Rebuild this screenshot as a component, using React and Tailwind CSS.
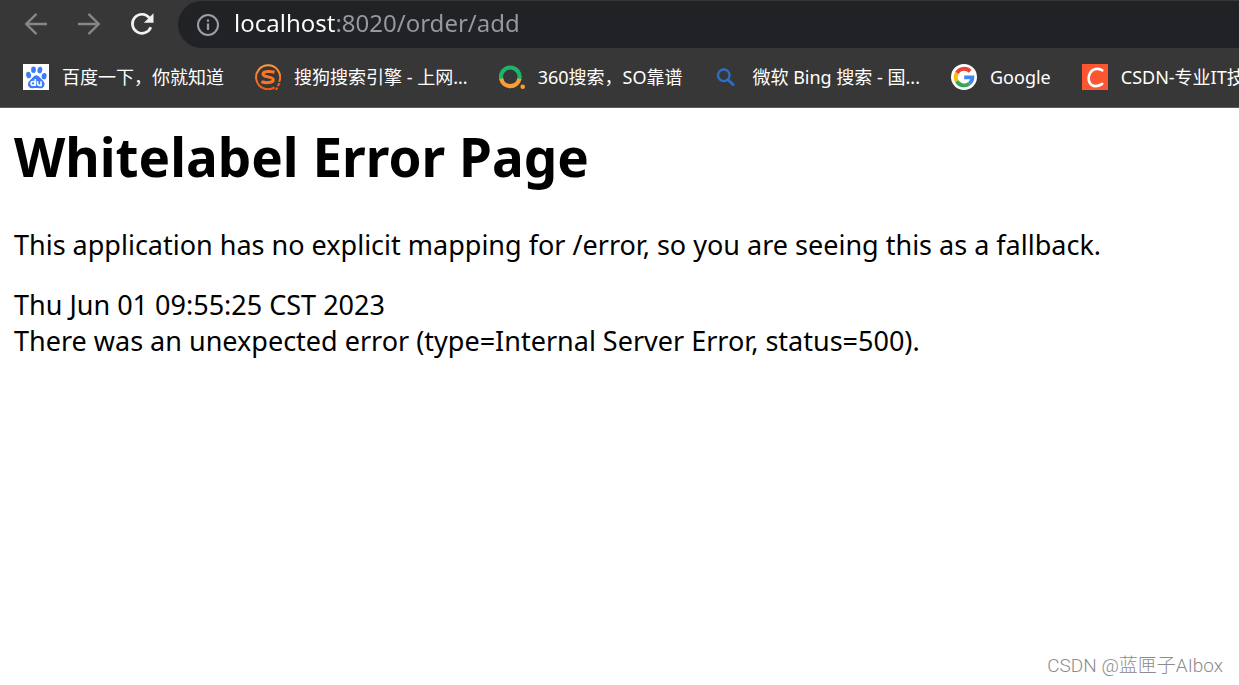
import React, { useState } from "react";

const BaiduIcon = () => (
  <svg viewBox="0 0 26 26" className="h-[26px] w-[26px] shrink-0" aria-hidden="true">
    <rect width="26" height="26" fill="#fff" />
    <g fill="#3e7bfa">
      <ellipse cx="5.6" cy="11" rx="2.5" ry="3.2" transform="rotate(-12 5.6 11)" />
      <ellipse cx="10.5" cy="5.8" rx="2.4" ry="3.3" />
      <ellipse cx="16.9" cy="6.1" rx="2.4" ry="3.3" transform="rotate(12 16.9 6.1)" />
      <ellipse cx="21.1" cy="12.2" rx="2.5" ry="3.2" transform="rotate(8 21.1 12.2)" />
      <path d="M13.3 11.2c2.5 0 3.6 2.3 5.3 4.1 1.6 1.7 3.4 3 2.9 5.6-.5 2.5-2.5 3.6-4.8 3.3-2.3-.3-4.7-.3-7 0C7.2 24.5 5.3 23.2 5 20.8c-.3-2.5 1.4-3.9 3-5.5 1.7-1.7 2.8-4.1 5.3-4.1z" />
    </g>
    <g fill="none" stroke="#fff" strokeWidth="1.6">
      <circle cx="10" cy="19.4" r="1.9" />
      <path d="M12.3 15v6.8M14.6 17.3v2.5q0 1.6 1.6 1.6H18v-4.1" />
    </g>
  </svg>
);

const SogouIcon = () => (
  <svg viewBox="0 0 26 26" className="h-[26px] w-[26px] shrink-0" aria-hidden="true">
    <defs>
      <linearGradient id="sogou" x1="0" y1="0" x2="0" y2="1">
        <stop offset="0" stopColor="#fb9a3c" />
        <stop offset="1" stopColor="#f9580f" />
      </linearGradient>
    </defs>
    <path
      d="M19.6 23.3A12 12 0 1 1 24.2 17.8"
      fill="none"
      stroke="url(#sogou)"
      strokeWidth="2"
    />
    <path
      d="M19.6 8.2C15.8 7.200 8 6.800 8 10.200s10.400 1.900 10.400 5.600c0 3.500-8.200 3.200-12 2"
      fill="none"
      stroke="#fb7623"
      strokeWidth="3"
    />
    <path d="M23.3 18.8l2.2.8-1.7 3-1.9-.8zM21.4 23l1.8 1.1-1 1.9h-2.3z" fill="#fa5a10" />
  </svg>
);

const So360Icon = () => (
  <svg viewBox="0 0 26 26" className="h-[26px] w-[26px] shrink-0" aria-hidden="true">
    <g fill="none" strokeWidth="4.2">
      <path d="M2.4 15.5A9.3 9.3 0 1 1 20.2 15.5" stroke="#1cb567" />
      <path d="M2.2 14.8A9.3 9.3 0 0 0 20.4 14.8" stroke="#fd9d35" />
    </g>
    <circle cx="23.7" cy="22.8" r="2.3" fill="#fd9d35" />
  </svg>
);

const BingIcon = () => (
  <svg viewBox="0 0 26 26" className="h-[26px] w-[26px] shrink-0" aria-hidden="true">
    <g fill="none" stroke="#2a6fce" strokeWidth="2.3">
      <circle cx="10.8" cy="11.3" r="5.8" />
      <path d="M15 15.7l6 5.7" strokeWidth="2.7" />
    </g>
  </svg>
);

const GoogleIcon = () => (
  <svg viewBox="0 0 26 26" className="h-[26px] w-[26px] shrink-0" aria-hidden="true">
    <circle cx="13" cy="13" r="13" fill="#fff" />
    <g fill="none" strokeWidth="3.8">
      <path d="M19.2 7.4A8.4 8.4 0 0 0 5.8 9" stroke="#ea4335" />
      <path d="M5.8 9A8.4 8.4 0 0 0 5.8 17.2" stroke="#fbbc05" />
      <path d="M5.8 17.2A8.4 8.4 0 0 0 18.6 19.4" stroke="#34a853" />
      <path d="M13.2 13.4h8.2A8.4 8.4 0 0 1 18.6 19.4" stroke="#4285f4" />
    </g>
  </svg>
);

const CsdnIcon = () => (
  <svg viewBox="0 0 26 26" className="h-[26px] w-[26px] shrink-0" aria-hidden="true">
    <rect width="26" height="26" fill="#fc5531" />
    <path
      d="M20.3 6.3C16 3.7 10.5 4.7 8 9.1c-2.4 4.4-1.7 9.5 1.5 11.8 3 2 7.3 1.2 10.7-1.1"
      fill="none"
      stroke="#fff"
      strokeWidth="2.6"
      strokeLinecap="round"
    />
  </svg>
);

const bookmarks = [
  { title: "百度一下，你就知道", icon: <BaiduIcon /> },
  { title: "搜狗搜索引擎 - 上网...", icon: <SogouIcon /> },
  { title: "360搜索，SO靠谱", icon: <So360Icon /> },
  { title: "微软 Bing 搜索 - 国...", icon: <BingIcon /> },
  { title: "Google", icon: <GoogleIcon /> },
  { title: "CSDN-专业IT技", icon: <CsdnIcon /> },
];

const App = () => {
  const [url, setUrl] = useState("localhost:8020/order/add");

  return (
    <div className="relative flex min-h-screen flex-col overflow-hidden bg-white font-['Noto_Sans','Noto_Sans_CJK_SC',sans-serif] text-black">
      <header className="border-b border-[#5e5a5c] bg-[#373737]">
        <div className="flex h-12 items-center pl-6">
          <div className="flex shrink-0 items-center gap-[29px]">
            <button type="button" aria-label="Back">
              <svg viewBox="0 0 24 24" className="h-6 w-6" fill="none" stroke="#858687" strokeWidth="2.4">
                <path d="M23 12H3M12.5 1.8L2.3 12l10.2 10.2" />
              </svg>
            </button>
            <button type="button" aria-label="Forward">
              <svg viewBox="0 0 24 24" className="h-6 w-6" fill="none" stroke="#858687" strokeWidth="2.4">
                <path d="M1 12h20M11.5 1.8L21.7 12 11.5 22.2" />
              </svg>
            </button>
            <button type="button" aria-label="Reload">
              <svg viewBox="0 0 24 24" className="h-6 w-6">
                <path
                  d="M20.8 15.2A9.5 9.5 0 1 1 19.5 6"
                  fill="none"
                  stroke="#f1f1f1"
                  strokeWidth="2.7"
                />
                <path d="M23.5 1.2v9.6h-9.6z" fill="#f1f1f1" />
              </svg>
            </button>
          </div>
          <div className="-mr-8 ml-6 flex h-[47px] flex-1 items-center gap-[14px] self-end rounded-full bg-[#202226] pl-[18px]">
            <svg viewBox="0 0 24 24" className="h-6 w-6 shrink-0" aria-hidden="true">
              <circle cx="12" cy="12" r="10" fill="none" stroke="#9b9ea4" strokeWidth="2" />
              <path d="M12 10.5v6.5M12 6.5v2.2" stroke="#9b9ea4" strokeWidth="2.2" />
            </svg>
            {/* host part is white, the rest of the address is grey */}
            <input
              type="text"
              aria-label="Address"
              value={url}
              onChange={(e) => setUrl(e.target.value)}
              className="h-9 min-w-0 flex-1 bg-[linear-gradient(to_right,#ffffff_101px,#96999e_101px)] bg-clip-text pb-1 text-2xl text-transparent caret-white outline-none"
            />
          </div>
        </div>
        <nav className="flex h-[59px] items-center gap-[31px] overflow-hidden pb-[2px] pl-[23px]">
          {bookmarks.map((item) => (
            <a
              key={item.title}
              href="#"
              className="flex shrink-0 items-center gap-[13px] text-lg leading-[26px] whitespace-nowrap text-white"
            >
              {item.icon}
              {item.title}
            </a>
          ))}
        </nav>
      </header>

      <main className="px-[14px] pt-[15px]">
        <h1 className="text-[53px] leading-[68px] font-bold">Whitelabel Error Page</h1>
        <p className="mt-9 text-[27px] leading-9">
          This application has no explicit mapping for /error, so you are seeing this as a fallback.
        </p>
        <div className="mt-6 text-[27px] leading-9">Thu Jun 01 09:55:25 CST 2023</div>
        <div className="text-[27px] leading-9">
          There was an unexpected error (type=Internal Server Error, status=500).
        </div>
      </main>

      <div className="absolute right-4 bottom-[7px] font-['Roboto','Noto_Sans_CJK_SC',sans-serif] text-[19px] leading-6 font-light text-[#8c8c8c]">
        CSDN @蓝匣子AIbox
      </div>
    </div>
  );
};

export default App;
